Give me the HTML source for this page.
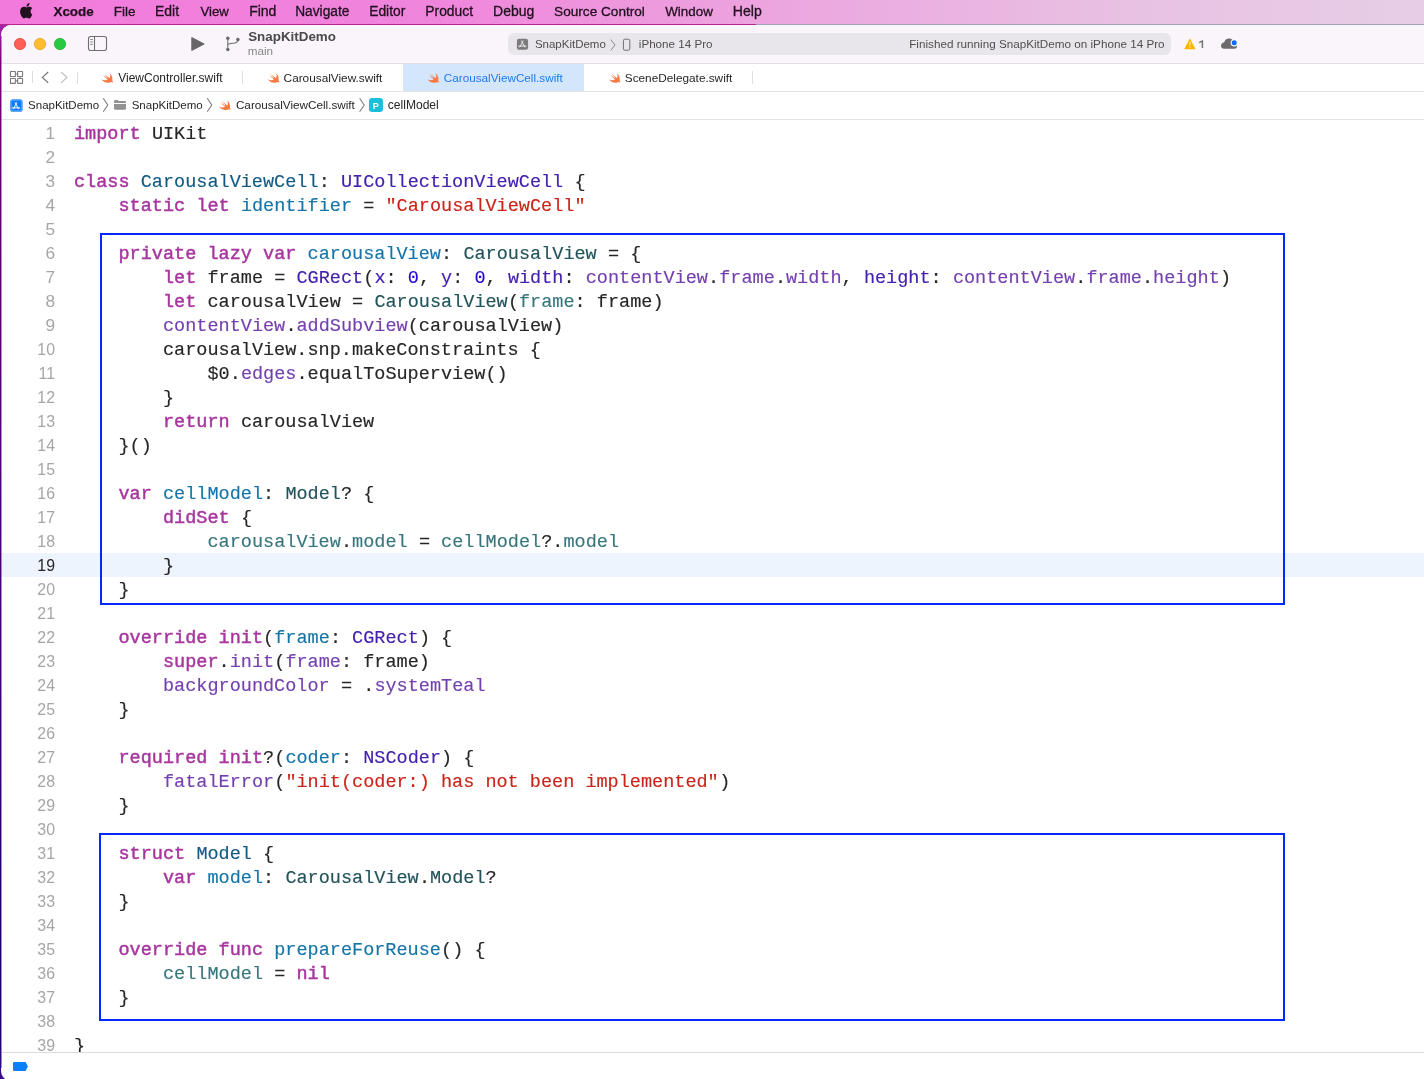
<!DOCTYPE html>
<html><head><meta charset="utf-8">
<style>
html,body{margin:0;padding:0;width:1424px;height:1079px;overflow:hidden;}
body{position:relative;background:linear-gradient(180deg,#A424A8 25px,#78007C 63px,#6A0070 153px,#5E0078 300px,#480078 603px,#22006E 903px,#1E0070 1040px,#3A1090 1079px);font-family:"Liberation Sans",sans-serif;}
.abs{position:absolute;}
#menubar{left:0;top:0;width:1424px;height:24px;background:linear-gradient(90deg,#F27ADC 0%,#F085DC 30%,#ECA6DF 55%,#E8C2E3 80%,#E7CEE6 100%);}
#mbline{left:0;top:23.5px;width:756px;height:1.5px;background:#B5288E;}
#mbline2{left:756px;top:23.5px;width:668px;height:1.5px;background:#A0A0B8;}
#win{left:1px;top:25px;width:1440px;height:1056px;background:#FFFFFF;border-radius:10px;overflow:hidden;}
</style></head><body>
<div id="menubar" class="abs"></div>
<div id="mbline" class="abs"></div>
<div id="mbline2" class="abs"></div>
<div id="win" class="abs">
  <div class="abs" style="left:0;top:0;width:1440px;height:38px;background:#F9F5FA;"></div>
  <div class="abs" style="left:0;top:38px;width:1440px;height:1px;background:#E2DFE4;"></div>
  <div class="abs" style="left:507px;top:8px;width:663px;height:22px;border-radius:6px;background:#E9E6EB;"></div>
  <div class="abs" style="left:402px;top:39px;width:181px;height:27px;background:#D3E6FB;"></div>
  <div class="abs" style="left:0;top:66px;width:1440px;height:1px;background:#E3E3E3;"></div>
  <div class="abs" style="left:0;top:94px;width:1440px;height:1px;background:#E3E3E3;"></div>
  <div class="abs" style="left:0;top:528px;width:1440px;height:24px;background:#EDF4FE;"></div>
  <div class="abs" style="left:99px;top:208px;width:1181px;height:368px;border:2px solid #0028FF;"></div>
  <div class="abs" style="left:98px;top:808px;width:1182px;height:184px;border:2px solid #0028FF;"></div>
  <div class="abs" style="left:0;top:1027px;width:1440px;height:1px;background:#DCDCDC;"></div>
</div>
<div class="abs" style="left:1px;top:36px;width:1px;height:1032px;background:linear-gradient(180deg,rgba(110,0,120,.45),rgba(72,0,120,.45) 50%,rgba(34,0,110,.45))"></div>
<svg class="abs" style="left:0;top:0;will-change:transform" width="1424" height="1079" viewBox="0 0 1424 1079">
<path transform="translate(19.9,1.75) scale(0.9)" fill="#22111F" d="M11.9,10.6c0-2.2,1.8-3.2,1.9-3.3c-1-1.5-2.6-1.7-3.2-1.7c-1.3-0.1-2.6,0.8-3.3,0.8c-0.7,0-1.7-0.8-2.8-0.8C3,5.6,1.6,6.5,0.9,7.8c-1.5,2.6-0.4,6.5,1.1,8.6c0.7,1,1.5,2.2,2.6,2.2c1,0,1.4-0.7,2.7-0.7c1.2,0,1.6,0.7,2.7,0.7c1.1,0,1.8-1,2.5-2c0.8-1.2,1.1-2.3,1.1-2.4C13.6,14.2,11.9,13.3,11.9,10.6z M9.8,4.2c0.6-0.7,1-1.7,0.9-2.7C9.8,1.5,8.8,2.1,8.2,2.8C7.6,3.4,7.1,4.4,7.3,5.4C8.2,5.5,9.2,4.9,9.8,4.2z"/>
<circle cx="20" cy="44" r="5.7" fill="#FF5F57" stroke="#D8453D" stroke-width="0.7"/>
<circle cx="40" cy="44" r="5.7" fill="#FEBC2E" stroke="#E0A020" stroke-width="0.7"/>
<circle cx="60" cy="44" r="5.7" fill="#28C840" stroke="#1DAD2F" stroke-width="0.7"/>
<rect x="88.5" y="36.5" width="18" height="14" rx="2.2" fill="none" stroke="#6E6E6E" stroke-width="1.1"/>
<line x1="94.5" y1="36.5" x2="94.5" y2="50.5" stroke="#6E6E6E" stroke-width="1.1"/>
<g stroke="#808080" stroke-width="0.9"><line x1="90.2" y1="39.5" x2="92.8" y2="39.5"/><line x1="90.2" y1="42" x2="92.8" y2="42"/><line x1="90.2" y1="44.4" x2="92.8" y2="44.4"/></g>
<path d="M191.9,37.7 L203.9,44 L191.9,50.3 Z" fill="#666666" stroke="#666666" stroke-width="1.2" stroke-linejoin="round"/>
<g stroke="#707070" stroke-width="1.1" fill="none"><line x1="227.8" y1="38.2" x2="227.8" y2="49.4"/><path d="M227.8,45 C228.5,43.6 230,43.4 233,43.3 C236.5,43.2 237.9,42 237.9,39.4"/></g>
<g fill="#6A6A6A"><circle cx="227.8" cy="38.2" r="1.75"/><circle cx="237.9" cy="39.4" r="1.75"/><circle cx="227.8" cy="49.4" r="1.75"/></g>
<rect x="516.9" y="38.7" width="11.2" height="11.1" rx="2.2" fill="#7B7B7B"/>
<g transform="translate(516.6,39.8) scale(0.95)" stroke="#E8E8E8" stroke-width="1.05" stroke-linecap="round" fill="none"><path d="M5.2,1.2 L8.6,7.6"/><path d="M6.8,1.2 L3.4,7.6"/><path d="M2,6.6 L10,6.6"/></g>
<path d="M610.8,39.6 L615,45 L610.8,50.4" fill="none" stroke="#8A8A8A" stroke-width="1"/>
<rect x="623.4" y="39.2" width="6.4" height="11" rx="1.4" fill="none" stroke="#6E6E6E" stroke-width="1"/>
<path d="M1189.9,38.9 L1195.1,48.9 L1184.7,48.9 Z" fill="#FFB300" stroke="#FFB300" stroke-width="0.6" stroke-linejoin="round"/>
<line x1="1189.9" y1="42" x2="1189.9" y2="45.6" stroke="#FFF3D6" stroke-width="1.1"/><circle cx="1189.9" cy="47.2" r="0.6" fill="#FFF3D6"/>
<path d="M1224,48.8 L1234.5,48.8 C1236.2,48.8 1237,47.6 1237,46.3 C1237,45 1236,44 1234.6,43.9 C1234.3,41 1232,38.6 1229,38.6 C1226.6,38.6 1224.8,40.2 1224.2,42.3 C1222.3,42.6 1221,44.2 1221,45.8 C1221,47.5 1222.3,48.8 1224,48.8 Z" fill="#6C6C6C"/>
<circle cx="1234.2" cy="42.8" r="3.6" fill="#F9F5FA"/><circle cx="1234.2" cy="42.8" r="2.5" fill="#0A6CFF"/>
<g fill="none" stroke="#7A7A7A" stroke-width="1.1"><rect x="10.45" y="71.55" width="4.9" height="4.9" rx="0.3"/><rect x="17.65" y="71.55" width="4.9" height="4.9" rx="0.3"/><rect x="10.45" y="78.45" width="4.9" height="4.9" rx="0.3"/><rect x="17.65" y="78.45" width="4.9" height="4.9" rx="0.3"/><path d="M15.4,74 L17.6,74 M20.1,76.5 L20.1,78.5 M15.4,80.9 L17.6,80.9"/></g>
<line x1="32.5" y1="71" x2="32.5" y2="83" stroke="#DCDCDC" stroke-width="1"/>
<path d="M48.2,72 L42.4,77.4 L48.2,82.8" fill="none" stroke="#6E6E6E" stroke-width="1.15"/>
<path d="M61.1,72 L66.9,77.4 L61.1,82.8" fill="none" stroke="#BDBDBD" stroke-width="1.15"/>
<line x1="77.5" y1="72" x2="77.5" y2="84" stroke="#DCDCDC" stroke-width="1"/>
<line x1="242.5" y1="71" x2="242.5" y2="84" stroke="#E0E0E0" stroke-width="1"/>
<line x1="752.5" y1="71" x2="752.5" y2="84" stroke="#E0E0E0" stroke-width="1"/>
<path transform="translate(101,72.3) scale(1.0)" d="M8.3,0.4 C10.8,2.5 11.8,5.5 11.3,8.2 C11.8,8.9 12,9.6 11.9,10.5 C11.2,9.7 10.3,9.6 9.6,9.9 C7,11.2 3,10.6 0.3,7 C2.5,8.1 4.8,8.3 6.6,7.2 C4.8,5.9 3,4.1 1.6,2.3 C3.4,3.9 5.5,5.4 7.5,6.3 C5.8,4.8 4.2,2.8 3.3,1.5 C5.3,3.3 7.2,4.8 8.8,5.8 C9.5,4 9.4,2 8.3,0.4 Z" fill="#F97A45"/>
<path transform="translate(267.3,72.3) scale(1.0)" d="M8.3,0.4 C10.8,2.5 11.8,5.5 11.3,8.2 C11.8,8.9 12,9.6 11.9,10.5 C11.2,9.7 10.3,9.6 9.6,9.9 C7,11.2 3,10.6 0.3,7 C2.5,8.1 4.8,8.3 6.6,7.2 C4.8,5.9 3,4.1 1.6,2.3 C3.4,3.9 5.5,5.4 7.5,6.3 C5.8,4.8 4.2,2.8 3.3,1.5 C5.3,3.3 7.2,4.8 8.8,5.8 C9.5,4 9.4,2 8.3,0.4 Z" fill="#F97A45"/>
<path transform="translate(427,72.3) scale(1.0)" d="M8.3,0.4 C10.8,2.5 11.8,5.5 11.3,8.2 C11.8,8.9 12,9.6 11.9,10.5 C11.2,9.7 10.3,9.6 9.6,9.9 C7,11.2 3,10.6 0.3,7 C2.5,8.1 4.8,8.3 6.6,7.2 C4.8,5.9 3,4.1 1.6,2.3 C3.4,3.9 5.5,5.4 7.5,6.3 C5.8,4.8 4.2,2.8 3.3,1.5 C5.3,3.3 7.2,4.8 8.8,5.8 C9.5,4 9.4,2 8.3,0.4 Z" fill="#F97A45"/>
<path transform="translate(608.4,72.3) scale(1.0)" d="M8.3,0.4 C10.8,2.5 11.8,5.5 11.3,8.2 C11.8,8.9 12,9.6 11.9,10.5 C11.2,9.7 10.3,9.6 9.6,9.9 C7,11.2 3,10.6 0.3,7 C2.5,8.1 4.8,8.3 6.6,7.2 C4.8,5.9 3,4.1 1.6,2.3 C3.4,3.9 5.5,5.4 7.5,6.3 C5.8,4.8 4.2,2.8 3.3,1.5 C5.3,3.3 7.2,4.8 8.8,5.8 C9.5,4 9.4,2 8.3,0.4 Z" fill="#F97A45"/>
<rect x="10.2" y="99.2" width="12.4" height="12.6" rx="2.6" fill="#0A7AFF"/>
<rect x="11" y="100" width="10.8" height="11" rx="1.8" fill="none" stroke="#9CC6FF" stroke-width="0.7"/>
<g transform="translate(10.3,101.6) scale(0.95)" stroke="#FFFFFF" stroke-width="1.05" stroke-linecap="round" fill="none"><path d="M5.2,1.2 L8.6,7.6"/><path d="M6.8,1.2 L3.4,7.6"/><path d="M2,6.6 L10,6.6"/></g>
<path d="M103.2,98.2 L107.8,105 L103.2,111.8" fill="none" stroke="#7E7E7E" stroke-width="1.1"/>
<path d="M207.2,98.2 L211.79999999999998,105 L207.2,111.8" fill="none" stroke="#7E7E7E" stroke-width="1.1"/>
<path d="M359.6,98.2 L364.20000000000005,105 L359.6,111.8" fill="none" stroke="#7E7E7E" stroke-width="1.1"/>
<path d="M114,101.2 Q114,100 115.2,100 L117.6,100 L118.6,101 L124.8,101 Q126,101 126,102.2 L126,103 L114,103 Z" fill="#939393"/>
<path d="M114,104 L126,104 L126,108.6 Q126,109.8 124.8,109.8 L115.2,109.8 Q114,109.8 114,108.6 Z" fill="#939393"/>
<path transform="translate(218.6,99.6) scale(1.0)" d="M8.3,0.4 C10.8,2.5 11.8,5.5 11.3,8.2 C11.8,8.9 12,9.6 11.9,10.5 C11.2,9.7 10.3,9.6 9.6,9.9 C7,11.2 3,10.6 0.3,7 C2.5,8.1 4.8,8.3 6.6,7.2 C4.8,5.9 3,4.1 1.6,2.3 C3.4,3.9 5.5,5.4 7.5,6.3 C5.8,4.8 4.2,2.8 3.3,1.5 C5.3,3.3 7.2,4.8 8.8,5.8 C9.5,4 9.4,2 8.3,0.4 Z" fill="#F97A45"/>
<rect x="369" y="98" width="14" height="14" rx="3.2" fill="#19BFDB"/>
<text x="372.7" y="108.9" font-family="Liberation Sans" font-weight="bold" font-size="9" fill="#FFFFFF">P</text>
<path d="M14.3,1062 L25.6,1062 L27.9,1066.5 L25.6,1071 L14.3,1071 Q13,1071 13,1069.7 L13,1063.3 Q13,1062 14.3,1062 Z" fill="#0A7FFF"/>
<g font-family="Liberation Sans">
<text x="53.47" y="15.80" font-size="13.423" fill="#21101F" font-weight="bold" stroke="#21101F" stroke-width="0.25">Xcode</text>
<text x="113.79" y="15.80" font-size="13.468" fill="#21101F" stroke="#21101F" stroke-width="0.3">File</text>
<text x="155.05" y="15.80" font-size="13.966" fill="#21101F" stroke="#21101F" stroke-width="0.3">Edit</text>
<text x="200.43" y="15.80" font-size="13.178" fill="#21101F" stroke="#21101F" stroke-width="0.3">View</text>
<text x="249.15" y="15.80" font-size="14.000" fill="#21101F" stroke="#21101F" stroke-width="0.3">Find</text>
<text x="295.17" y="15.80" font-size="13.743" fill="#21101F" stroke="#21101F" stroke-width="0.3">Navigate</text>
<text x="369.16" y="15.80" font-size="13.837" fill="#21101F" stroke="#21101F" stroke-width="0.3">Editor</text>
<text x="425.25" y="15.80" font-size="13.890" fill="#21101F" stroke="#21101F" stroke-width="0.3">Product</text>
<text x="493.04" y="15.80" font-size="14.036" fill="#21101F" stroke="#21101F" stroke-width="0.3">Debug</text>
<text x="554.09" y="15.80" font-size="13.618" fill="#21101F" stroke="#21101F" stroke-width="0.3">Source Control</text>
<text x="665.23" y="15.80" font-size="13.418" fill="#21101F" stroke="#21101F" stroke-width="0.3">Window</text>
<text x="732.84" y="15.80" font-size="14.075" fill="#21101F" stroke="#21101F" stroke-width="0.3">Help</text>
<text x="248.20" y="40.90" font-size="13.395" fill="#4A4A4A" font-weight="bold">SnapKitDemo</text>
<text x="247.81" y="54.90" font-size="11.681" fill="#888888">main</text>
<text x="534.88" y="47.60" font-size="11.504" fill="#4F4F4F">SnapKitDemo</text>
<text x="638.81" y="47.60" font-size="11.637" fill="#4F4F4F">iPhone 14 Pro</text>
<text x="909.24" y="47.60" font-size="11.696" fill="#4F4F4F">Finished running SnapKitDemo on iPhone 14 Pro</text>
<path d="M1199.2,42.6 L1202.4,40.9 L1202.4,48" fill="none" stroke="#767676" stroke-width="1.5" stroke-linejoin="round"/>
<text x="118.24" y="82.00" font-size="11.995" fill="#262626">ViewController.swift</text>
<text x="283.61" y="82.00" font-size="11.818" fill="#262626">CarousalView.swift</text>
<text x="443.81" y="82.00" font-size="11.738" fill="#1F7AEF">CarousalViewCell.swift</text>
<text x="624.77" y="82.00" font-size="11.807" fill="#262626">SceneDelegate.swift</text>
<text x="28.08" y="109.20" font-size="11.504" fill="#262626">SnapKitDemo</text>
<text x="131.68" y="109.20" font-size="11.537" fill="#262626">SnapKitDemo</text>
<text x="235.91" y="109.20" font-size="11.729" fill="#262626">CarousalViewCell.swift</text>
<text x="387.79" y="109.20" font-size="12.078" fill="#262626">cellModel</text>
</g>
<g font-family="Liberation Sans" font-size="17.3" text-anchor="end">
<text transform="translate(55.00,139.00) scale(1.0,1)" fill="#A6A6A6">1</text>
<text transform="translate(55.00,163.00) scale(1.0,1)" fill="#A6A6A6">2</text>
<text transform="translate(55.00,187.00) scale(1.0,1)" fill="#A6A6A6">3</text>
<text transform="translate(55.00,211.00) scale(1.0,1)" fill="#A6A6A6">4</text>
<text transform="translate(55.00,235.00) scale(1.0,1)" fill="#A6A6A6">5</text>
<text transform="translate(55.00,259.00) scale(1.0,1)" fill="#A6A6A6">6</text>
<text transform="translate(55.00,283.00) scale(1.0,1)" fill="#A6A6A6">7</text>
<text transform="translate(55.00,307.00) scale(1.0,1)" fill="#A6A6A6">8</text>
<text transform="translate(55.00,331.00) scale(1.0,1)" fill="#A6A6A6">9</text>
<text transform="translate(55.00,355.00) scale(0.92,1)" fill="#A6A6A6">10</text>
<text transform="translate(55.00,379.00) scale(0.92,1)" fill="#A6A6A6">11</text>
<text transform="translate(55.00,403.00) scale(0.92,1)" fill="#A6A6A6">12</text>
<text transform="translate(55.00,427.00) scale(0.92,1)" fill="#A6A6A6">13</text>
<text transform="translate(55.00,451.00) scale(0.92,1)" fill="#A6A6A6">14</text>
<text transform="translate(55.00,475.00) scale(0.92,1)" fill="#A6A6A6">15</text>
<text transform="translate(55.00,499.00) scale(0.92,1)" fill="#A6A6A6">16</text>
<text transform="translate(55.00,523.00) scale(0.92,1)" fill="#A6A6A6">17</text>
<text transform="translate(55.00,547.00) scale(0.92,1)" fill="#A6A6A6">18</text>
<text transform="translate(55.00,571.00) scale(0.92,1)" fill="#262626">19</text>
<text transform="translate(55.00,595.00) scale(0.92,1)" fill="#A6A6A6">20</text>
<text transform="translate(55.00,619.00) scale(0.92,1)" fill="#A6A6A6">21</text>
<text transform="translate(55.00,643.00) scale(0.92,1)" fill="#A6A6A6">22</text>
<text transform="translate(55.00,667.00) scale(0.92,1)" fill="#A6A6A6">23</text>
<text transform="translate(55.00,691.00) scale(0.92,1)" fill="#A6A6A6">24</text>
<text transform="translate(55.00,715.00) scale(0.92,1)" fill="#A6A6A6">25</text>
<text transform="translate(55.00,739.00) scale(0.92,1)" fill="#A6A6A6">26</text>
<text transform="translate(55.00,763.00) scale(0.92,1)" fill="#A6A6A6">27</text>
<text transform="translate(55.00,787.00) scale(0.92,1)" fill="#A6A6A6">28</text>
<text transform="translate(55.00,811.00) scale(0.92,1)" fill="#A6A6A6">29</text>
<text transform="translate(55.00,835.00) scale(0.92,1)" fill="#A6A6A6">30</text>
<text transform="translate(55.00,859.00) scale(0.92,1)" fill="#A6A6A6">31</text>
<text transform="translate(55.00,883.00) scale(0.92,1)" fill="#A6A6A6">32</text>
<text transform="translate(55.00,907.00) scale(0.92,1)" fill="#A6A6A6">33</text>
<text transform="translate(55.00,931.00) scale(0.92,1)" fill="#A6A6A6">34</text>
<text transform="translate(55.00,955.00) scale(0.92,1)" fill="#A6A6A6">35</text>
<text transform="translate(55.00,979.00) scale(0.92,1)" fill="#A6A6A6">36</text>
<text transform="translate(55.00,1003.00) scale(0.92,1)" fill="#A6A6A6">37</text>
<text transform="translate(55.00,1027.00) scale(0.92,1)" fill="#A6A6A6">38</text>
<text transform="translate(55.00,1051.00) scale(0.92,1)" fill="#A6A6A6">39</text>
</g>
<style>.k{fill:#A7359E;stroke:#A7359E;stroke-width:0.45px}.p{fill:#262626;stroke:#262626;stroke-width:0.15px}.s{fill:#CA2419;stroke:#CA2419;stroke-width:0.15px}.n{fill:#2408D4;stroke:#2408D4;stroke-width:0.15px}.td{fill:#125A83;stroke:#125A83;stroke-width:0.15px}.od{fill:#1474A8;stroke:#1474A8;stroke-width:0.15px}.pc{fill:#21535A;stroke:#21535A;stroke-width:0.15px}.pf{fill:#37767C;stroke:#37767C;stroke-width:0.15px}.oc{fill:#4420B0;stroke:#4420B0;stroke-width:0.15px}.of{fill:#7440AF;stroke:#7440AF;stroke-width:0.15px}</style>
<defs><clipPath id="edclip"><rect x="0" y="120" width="1424" height="932"/></clipPath></defs>
<g font-family="Liberation Mono" font-size="18.538" clip-path="url(#edclip)">
<text class="k" x="74.00" y="139.00">import</text>
<text class="p" x="151.88" y="139.00">UIKit</text>
<text class="k" x="74.00" y="187.00">class</text>
<text class="td" x="140.75" y="187.00">CarousalViewCell</text>
<text class="p" x="318.75" y="187.00">: </text>
<text class="oc" x="341.00" y="187.00">UICollectionViewCell</text>
<text class="p" x="574.62" y="187.00">{</text>
<text class="k" x="118.50" y="211.00">static</text>
<text class="k" x="196.38" y="211.00">let</text>
<text class="od" x="240.88" y="211.00">identifier</text>
<text class="p" x="363.25" y="211.00">= </text>
<text class="s" x="385.50" y="211.00">&quot;CarousalViewCell&quot;</text>
<text class="k" x="118.50" y="259.00">private</text>
<text class="k" x="207.50" y="259.00">lazy</text>
<text class="k" x="263.12" y="259.00">var</text>
<text class="od" x="307.62" y="259.00">carousalView</text>
<text class="p" x="441.12" y="259.00">: </text>
<text class="pc" x="463.38" y="259.00">CarousalView</text>
<text class="p" x="608.00" y="259.00">= {</text>
<text class="k" x="163.00" y="283.00">let</text>
<text class="p" x="207.50" y="283.00">frame = </text>
<text class="oc" x="296.50" y="283.00">CGRect</text>
<text class="p" x="363.25" y="283.00">(</text>
<text class="oc" x="374.38" y="283.00">x</text>
<text class="p" x="385.50" y="283.00">: </text>
<text class="n" x="407.75" y="283.00">0</text>
<text class="p" x="418.88" y="283.00">, </text>
<text class="oc" x="441.12" y="283.00">y</text>
<text class="p" x="452.25" y="283.00">: </text>
<text class="n" x="474.50" y="283.00">0</text>
<text class="p" x="485.62" y="283.00">, </text>
<text class="oc" x="507.88" y="283.00">width</text>
<text class="p" x="563.50" y="283.00">: </text>
<text class="of" x="585.75" y="283.00">contentView</text>
<text class="p" x="708.12" y="283.00">.</text>
<text class="of" x="719.25" y="283.00">frame</text>
<text class="p" x="774.88" y="283.00">.</text>
<text class="of" x="786.00" y="283.00">width</text>
<text class="p" x="841.62" y="283.00">, </text>
<text class="oc" x="863.88" y="283.00">height</text>
<text class="p" x="930.62" y="283.00">: </text>
<text class="of" x="952.88" y="283.00">contentView</text>
<text class="p" x="1075.25" y="283.00">.</text>
<text class="of" x="1086.38" y="283.00">frame</text>
<text class="p" x="1142.00" y="283.00">.</text>
<text class="of" x="1153.12" y="283.00">height</text>
<text class="p" x="1219.88" y="283.00">)</text>
<text class="k" x="163.00" y="307.00">let</text>
<text class="p" x="207.50" y="307.00">carousalView = </text>
<text class="pc" x="374.38" y="307.00">CarousalView</text>
<text class="p" x="507.88" y="307.00">(</text>
<text class="pf" x="519.00" y="307.00">frame</text>
<text class="p" x="574.62" y="307.00">: frame)</text>
<text class="of" x="163.00" y="331.00">contentView</text>
<text class="p" x="285.38" y="331.00">.</text>
<text class="of" x="296.50" y="331.00">addSubview</text>
<text class="p" x="407.75" y="331.00">(carousalView)</text>
<text class="p" x="163.00" y="355.00">carousalView.snp.makeConstraints {</text>
<text class="p" x="207.50" y="379.00">$0.</text>
<text class="of" x="240.88" y="379.00">edges</text>
<text class="p" x="296.50" y="379.00">.equalToSuperview()</text>
<text class="p" x="163.00" y="403.00">}</text>
<text class="k" x="163.00" y="427.00">return</text>
<text class="p" x="240.88" y="427.00">carousalView</text>
<text class="p" x="118.50" y="451.00">}()</text>
<text class="k" x="118.50" y="499.00">var</text>
<text class="od" x="163.00" y="499.00">cellModel</text>
<text class="p" x="263.12" y="499.00">: </text>
<text class="pc" x="285.38" y="499.00">Model</text>
<text class="p" x="341.00" y="499.00">? {</text>
<text class="k" x="163.00" y="523.00">didSet</text>
<text class="p" x="240.88" y="523.00">{</text>
<text class="pf" x="207.50" y="547.00">carousalView</text>
<text class="p" x="341.00" y="547.00">.</text>
<text class="pf" x="352.12" y="547.00">model</text>
<text class="p" x="418.88" y="547.00">= </text>
<text class="pf" x="441.12" y="547.00">cellModel</text>
<text class="p" x="541.25" y="547.00">?.</text>
<text class="pf" x="563.50" y="547.00">model</text>
<text class="p" x="163.00" y="571.00">}</text>
<text class="p" x="118.50" y="595.00">}</text>
<text class="k" x="118.50" y="643.00">override</text>
<text class="k" x="218.62" y="643.00">init</text>
<text class="p" x="263.12" y="643.00">(</text>
<text class="od" x="274.25" y="643.00">frame</text>
<text class="p" x="329.88" y="643.00">: </text>
<text class="oc" x="352.12" y="643.00">CGRect</text>
<text class="p" x="418.88" y="643.00">) {</text>
<text class="k" x="163.00" y="667.00">super</text>
<text class="p" x="218.62" y="667.00">.</text>
<text class="of" x="229.75" y="667.00">init</text>
<text class="p" x="274.25" y="667.00">(</text>
<text class="of" x="285.38" y="667.00">frame</text>
<text class="p" x="341.00" y="667.00">: frame)</text>
<text class="of" x="163.00" y="691.00">backgroundColor</text>
<text class="p" x="341.00" y="691.00">= .</text>
<text class="of" x="374.38" y="691.00">systemTeal</text>
<text class="p" x="118.50" y="715.00">}</text>
<text class="k" x="118.50" y="763.00">required</text>
<text class="k" x="218.62" y="763.00">init</text>
<text class="p" x="263.12" y="763.00">?(</text>
<text class="od" x="285.38" y="763.00">coder</text>
<text class="p" x="341.00" y="763.00">: </text>
<text class="oc" x="363.25" y="763.00">NSCoder</text>
<text class="p" x="441.12" y="763.00">) {</text>
<text class="of" x="163.00" y="787.00">fatalError</text>
<text class="p" x="274.25" y="787.00">(</text>
<text class="s" x="285.38" y="787.00">&quot;init(coder:) has not been implemented&quot;</text>
<text class="p" x="719.25" y="787.00">)</text>
<text class="p" x="118.50" y="811.00">}</text>
<text class="k" x="118.50" y="859.00">struct</text>
<text class="td" x="196.38" y="859.00">Model</text>
<text class="p" x="263.12" y="859.00">{</text>
<text class="k" x="163.00" y="883.00">var</text>
<text class="od" x="207.50" y="883.00">model</text>
<text class="p" x="263.12" y="883.00">: </text>
<text class="pc" x="285.38" y="883.00">CarousalView</text>
<text class="p" x="418.88" y="883.00">.</text>
<text class="pc" x="430.00" y="883.00">Model</text>
<text class="p" x="485.62" y="883.00">?</text>
<text class="p" x="118.50" y="907.00">}</text>
<text class="k" x="118.50" y="955.00">override</text>
<text class="k" x="218.62" y="955.00">func</text>
<text class="od" x="274.25" y="955.00">prepareForReuse</text>
<text class="p" x="441.12" y="955.00">() {</text>
<text class="pf" x="163.00" y="979.00">cellModel</text>
<text class="p" x="274.25" y="979.00">= </text>
<text class="k" x="296.50" y="979.00">nil</text>
<text class="p" x="118.50" y="1003.00">}</text>
<text class="p" x="74.00" y="1051.00">}</text>
</g>
</svg>
</body></html>
